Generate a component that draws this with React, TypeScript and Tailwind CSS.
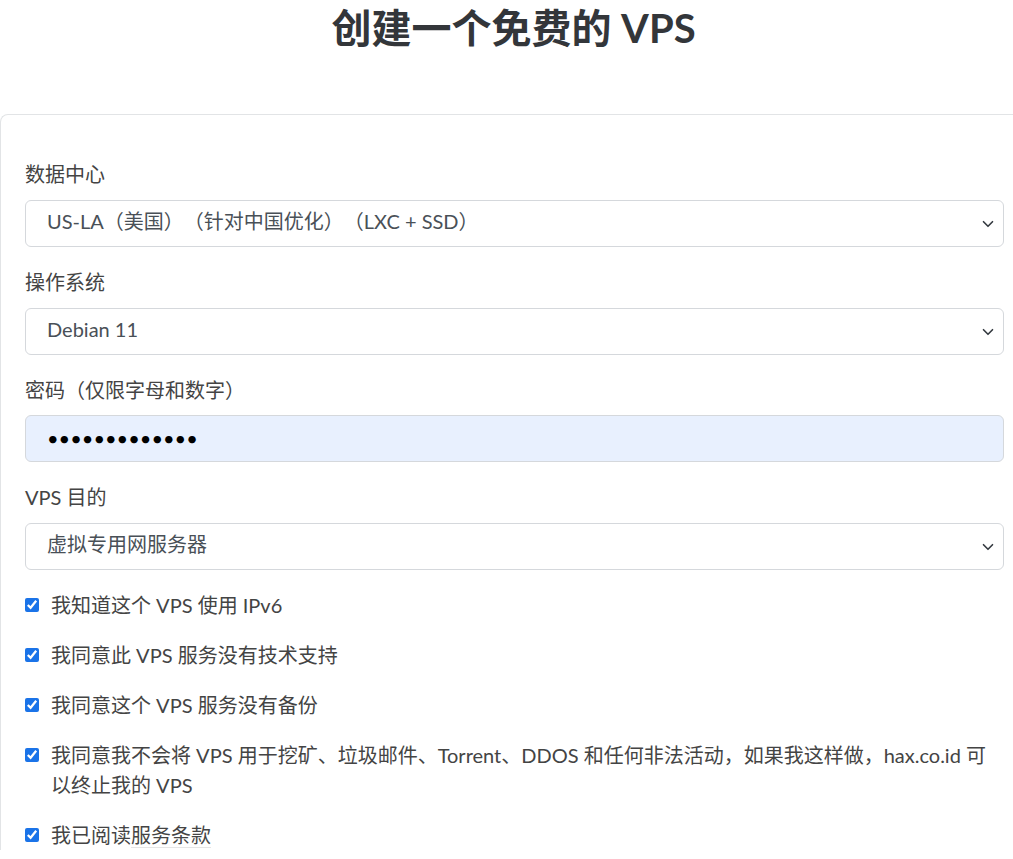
import { useState } from "react";

const FONT = "font-['Lato','Noto_Sans_CJK_SC',sans-serif]";

// Chevron used by the select fields
function Chevron() {
    return (
        <svg width="12" height="12" viewBox="0 0 16 16" className="pointer-events-none absolute right-[10px] top-1/2 -translate-y-1/2">
            <path d="M2 5l6 6 6-6" fill="none" stroke="#343a40" strokeWidth="2.2" strokeLinecap="round" strokeLinejoin="round" />
        </svg>
    );
}

function SelectField({ label, options }: { label: string; options: string[] }) {
    return (
        <div className="mb-[20px]">
            <label className="block text-[20px] leading-[30px] text-[#444] mb-[11px]">{label}</label>
            <div className="relative">
                <select className="w-full h-[47px] appearance-none rounded-[6px] border border-[#d5d8dc] bg-white pl-[21px] pr-10 pb-[5px] text-[20px] text-[#495057] outline-none [text-spacing-trim:space-all]">
                    {options.map((o) => (
                        <option key={o}>{o}</option>
                    ))}
                </select>
                <Chevron />
            </div>
        </div>
    );
}

const agreements = [
    "我知道这个 VPS 使用 IPv6",
    "我同意此 VPS 服务没有技术支持",
    "我同意这个 VPS 服务没有备份",
    "我同意我不会将 VPS 用于挖矿、垃圾邮件、Torrent、DDOS 和任何非法活动，如果我这样做，hax.co.id 可以终止我的 VPS",
];

export default function App() {
    const [checked, setChecked] = useState<boolean[]>([true, true, true, true, true]);

    const toggle = (i: number) => setChecked((c) => c.map((v, j) => (j === i ? !v : v)));

    return (
        <div className={`${FONT} bg-white min-h-[859px] overflow-hidden`}>
            <h1 className="pt-[4px] pl-[14px] h-[114px] text-center text-[40px] leading-[48px] font-bold text-[#33363a]">
                创建一个免费的 VPS
            </h1>

            <div className="-mr-4 border-t border-l border-[#e2e4e6] rounded-tl-[8px] pt-[44px] pl-[24px] pr-[25px]">
                <SelectField label="数据中心" options={["US-LA（美国）（针对中国优化）（LXC + SSD）"]} />
                <SelectField label="操作系统" options={["Debian 11"]} />

                <div className="mb-[20px]">
                    <label className="block text-[20px] leading-[30px] text-[#444] mb-[10px]">密码（仅限字母和数字）</label>
                    <input
                        type="password"
                        defaultValue="abcdefghijklm"
                        className="w-full h-[47px] rounded-[6px] border border-[#d5d8dc] bg-[#e8f0fe] pl-[21px] pb-[2px] text-[20px] text-black outline-none"
                    />
                </div>

                <SelectField label="VPS 目的" options={["虚拟专用网服务器"]} />

                <div className="flex flex-col gap-[20px]">
                    {[...agreements, "我已阅读服务条款"].map((text, i) => (
                        <label key={i} className="flex items-start text-[20px] leading-[30px] text-[#444]">
                            <input
                                type="checkbox"
                                checked={checked[i]}
                                onChange={() => toggle(i)}
                                className="mt-[8px] w-[14px] h-[14px] shrink-0 accent-[#1a73e8]"
                            />
                            <span className="ml-[12px]">
                                {i === 4 ? (
                                    <>
                                        我已阅读<span className="border-b border-[#e5e5e5]">服务条款</span>
                                    </>
                                ) : (
                                    text
                                )}
                            </span>
                        </label>
                    ))}
                </div>
            </div>
        </div>
    );
}
